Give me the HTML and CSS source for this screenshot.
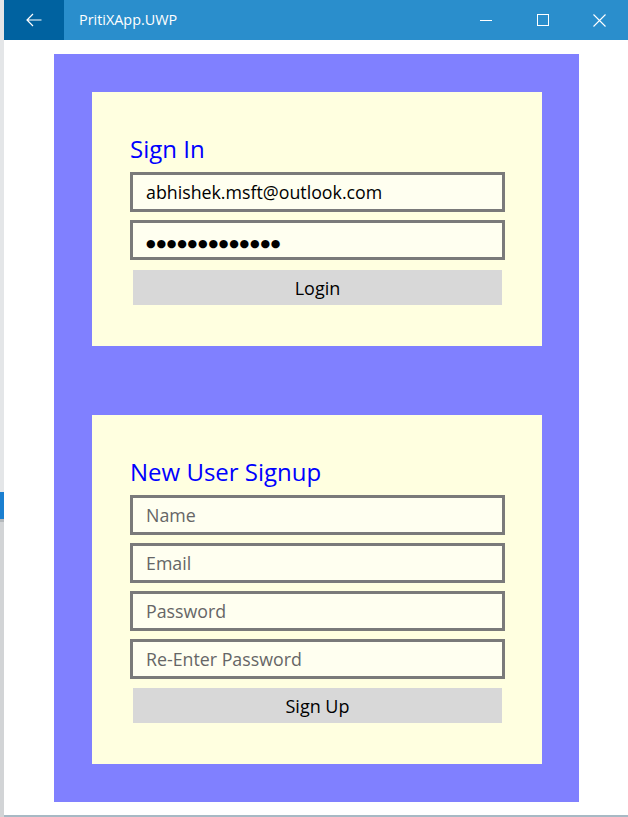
FILE: index.html
```html
<!DOCTYPE html>
<html lang="en">
<head>
<meta charset="utf-8">
<title>PritiXApp.UWP</title>
<link rel="stylesheet" href="styles.css">
</head>
<body>
<div class="desktop">
  <div class="edge">
    <div class="edge-top"></div>
    <div class="edge-blue"></div>
    <div class="edge-rest"></div>
  </div>
  <div class="window">
    <header class="titlebar">
      <div class="back">
        <svg width="16" height="14" viewBox="0 0 16 14"><path d="M7 1 L1 7 L7 13 M1 7 H15.5" fill="none" stroke="#fff" stroke-width="1.2"/></svg>
      </div>
      <div class="title">PritiXApp.UWP</div>
      <div class="ctrl">
        <svg width="12" height="12" viewBox="0 0 12 12"><path d="M0 6.5 H12" stroke="#fff" stroke-width="1"/></svg>
      </div>
      <div class="ctrl">
        <svg width="12" height="12" viewBox="0 0 12 12"><rect x="0.5" y="0.5" width="11" height="11" fill="none" stroke="#fff" stroke-width="1"/></svg>
      </div>
      <div class="ctrl">
        <svg width="13" height="13" viewBox="0 0 13 13"><path d="M0.5 0.5 L12.5 12.5 M12.5 0.5 L0.5 12.5" stroke="#fff" stroke-width="1.1"/></svg>
      </div>
    </header>
    <main class="content">
      <div class="panel">
        <section class="card">
          <h2 class="card-title">Sign In</h2>
          <div class="fields">
            <div class="field">abhishek.msft@outlook.com</div>
            <div class="field"><span class="dots">●●●●●●●●●●●●●</span></div>
          </div>
          <div class="btn">Login</div>
        </section>
        <section class="card">
          <h2 class="card-title">New User Signup</h2>
          <div class="fields">
            <div class="field placeholder">Name</div>
            <div class="field placeholder">Email</div>
            <div class="field placeholder">Password</div>
            <div class="field placeholder">Re-Enter Password</div>
          </div>
          <div class="btn btn-signup">Sign Up</div>
        </section>
      </div>
    </main>
    <div class="bottom-border"></div>
  </div>
</div>
</body>
</html>
```
FILE: styles.css
```css
* { box-sizing: border-box; }
html, body { margin: 0; padding: 0; }
body {
  width: 628px;
  height: 817px;
  overflow: hidden;
  font-family: "Open Sans", "Noto Sans", sans-serif;
}
.desktop {
  display: flex;
  height: 817px;
  background: #d4d7d9;
}
.edge {
  width: 4px;
  display: flex;
  flex-direction: column;
}
.edge-top { height: 492px; background: #e4e6e8; }
.edge-blue { height: 27px; background: #1a7fd0; }
.edge-rest { flex: 1; background: #d2d4d6; border-top: 3px solid #b5b9bc; }
.window {
  flex: 1;
  display: flex;
  flex-direction: column;
  background: #fff;
}
.titlebar {
  height: 40px;
  display: flex;
  align-items: stretch;
  background: #2a8ecc;
  color: #fff;
}
.back {
  width: 60px;
  background: #0062a0;
  display: flex;
  align-items: center;
  justify-content: center;
}
.title {
  flex: 1;
  padding-left: 15px;
  font-size: 14.4px;
  line-height: 39px;
}
.ctrl {
  width: 57px;
  display: flex;
  align-items: center;
  justify-content: center;
}
.content {
  flex: 1;
  padding: 14px 49px 0 50px;
}
.panel {
  background: #8080ff;
  padding: 38px 37px 38px 38px;
  display: flex;
  flex-direction: column;
  gap: 69px;
}
.card {
  background: #ffffe0;
  padding: 38px 37px 41px 38px;
  display: flex;
  flex-direction: column;
}
.card-title {
  margin: 0 0 6px;
  padding-top: 2px;
  font-size: 24px;
  font-weight: normal;
  line-height: 34px;
  color: #0000ff;
}
.fields {
  display: flex;
  flex-direction: column;
  gap: 8px;
}
.field {
  height: 40px;
  border: 3px solid #7a7a7a;
  background: #fffff0;
  padding-left: 13px;
  font-size: 17.8px;
  line-height: 34px;
  color: #000;
  white-space: nowrap;
}
.placeholder { color: #666; }
.dots {
  font-family: "DejaVu Sans", sans-serif;
  font-size: 11px;
  letter-spacing: 0.8px;
}
.btn {
  margin: 10px 3px 0;
  height: 35px;
  background: #d8d8d8;
  text-align: center;
  font-size: 18px;
  line-height: 36px;
  color: #000;
}
.btn-signup { margin-top: 9px; }
.bottom-border {
  height: 2px;
  background: #a7b9c4;
}
```
